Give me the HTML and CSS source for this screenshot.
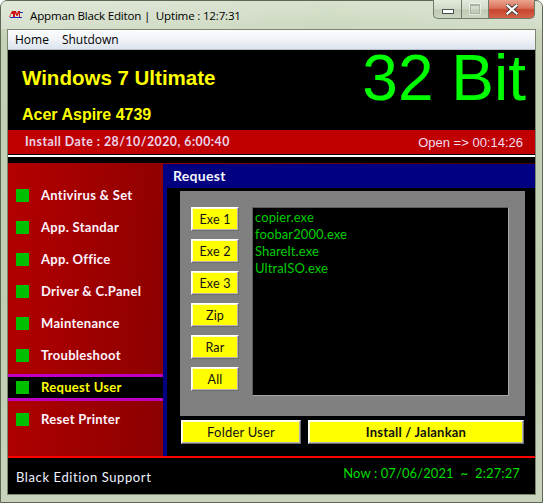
FILE: index.html
```html
<!DOCTYPE html>
<html>
<head>
<meta charset="utf-8">
<title>Appman Black Editon</title>
<link rel="stylesheet" href="styles.css">
</head>
<body>
<div class="window">
  <div class="titlebar">
    <svg class="app-icon" width="14" height="7" viewBox="0 0 14 7">
      <polygon points="0,6 3,0 5,0 5,6 4,6 4,3 2,3 1,6" fill="#d01010"/>
      <polygon points="5,0 7,0 8,3 9,0 11,0 11,6 10,6 10,2 8.5,5 7.5,5 6,2 6,6 5,6" fill="#d01010"/>
      <rect x="1" y="6" width="12" height="1" fill="#2030c0"/>
      <rect x="11" y="1" width="3" height="1" fill="#2030c0"/>
    </svg>
    <span class="title">Appman Black Editon |&nbsp; Uptime : 12:7:31</span>
    <div class="caption-buttons">
      <div class="cbtn cmin"><span class="min-glyph"></span></div>
      <div class="cbtn cmax"><span class="max-glyph"></span></div>
      <div class="cbtn cclose">
        <svg width="12" height="11" viewBox="0 0 12 11">
          <path d="M1.5 1.5 L10.5 9.5 M10.5 1.5 L1.5 9.5" stroke="#3a3a3a" stroke-width="4" stroke-linecap="square"/>
          <path d="M1.5 1.5 L10.5 9.5 M10.5 1.5 L1.5 9.5" stroke="#ffffff" stroke-width="2.2" stroke-linecap="square"/>
        </svg>
      </div>
    </div>
  </div>
  <div class="client">
    <div class="menubar">
      <span class="menu-item">Home</span>
      <span class="menu-item">Shutdown</span>
    </div>
    <div class="header">
      <div class="hleft">
        <div class="os">Windows 7 Ultimate</div>
        <div class="model">Acer Aspire 4739</div>
      </div>
      <div class="bits">32 Bit</div>
    </div>
    <div class="infobar">
      <span class="install">Install Date : 28/10/2020, 6:00:40</span>
      <span class="open">Open =&gt; 00:14:26</span>
    </div>
    <div class="sep"></div>
    <div class="main">
      <nav class="sidebar">
        <div class="nav-item"><span class="sq"></span><span class="lbl">Antivirus &amp; Set</span></div>
        <div class="nav-item"><span class="sq"></span><span class="lbl">App. Standar</span></div>
        <div class="nav-item"><span class="sq"></span><span class="lbl">App. Office</span></div>
        <div class="nav-item"><span class="sq"></span><span class="lbl">Driver &amp; C.Panel</span></div>
        <div class="nav-item"><span class="sq"></span><span class="lbl">Maintenance</span></div>
        <div class="nav-item"><span class="sq"></span><span class="lbl">Troubleshoot</span></div>
        <div class="nav-item active"><span class="sq"></span><span class="lbl">Request User</span></div>
        <div class="nav-item"><span class="sq"></span><span class="lbl">Reset Printer</span></div>
      </nav>
      <section class="panel">
        <div class="panel-head">Request</div>
        <div class="panel-body">
          <div class="box">
            <div class="btncol">
              <div class="ybtn small">Exe 1</div>
              <div class="ybtn small">Exe 2</div>
              <div class="ybtn small">Exe 3</div>
              <div class="ybtn small">Zip</div>
              <div class="ybtn small">Rar</div>
              <div class="ybtn small">All</div>
            </div>
            <div class="list">
              <div class="li">copier.exe</div>
              <div class="li">foobar2000.exe</div>
              <div class="li">ShareIt.exe</div>
              <div class="li">UltraISO.exe</div>
            </div>
          </div>
          <div class="actions">
            <div class="ybtn folder">Folder User</div>
            <div class="ybtn run">Install / Jalankan</div>
          </div>
        </div>
      </section>
    </div>
    <div class="footer">
      <span class="support">Black Edition Support</span>
      <span class="now">Now : 07/06/2021 &nbsp;~&nbsp; 2:27:27</span>
    </div>
  </div>
</div>
</body>
</html>
```

FILE: styles.css
```css
html, body {
  margin: 0;
  padding: 0;
  width: 543px;
  height: 503px;
  overflow: hidden;
  background: #ffffff;
}

.window {
  width: 543px;
  height: 503px;
  box-sizing: border-box;
  border: 1px solid #5d6754;
  border-radius: 7px 7px 0 0;
  background: linear-gradient(180deg, #d6e0cb 0%, #c5d2b7 8%, #bfcdb1 60%, #c8d4bc 100%);
  display: flex;
  flex-direction: column;
  font-family: "Open Sans", "Noto Sans", sans-serif;
}

/* Title bar */
.titlebar {
  height: 28px;
  flex: none;
  display: flex;
  align-items: center;
  padding-left: 8px;
  background: linear-gradient(90deg, rgba(255,255,255,0.25), rgba(255,255,255,0.05) 60%, rgba(255,255,255,0.15));
}

.app-icon {
  flex: none;
  margin-right: 7px;
  margin-top: -1px;
}

.title {
  font-size: 11.6px;
  color: #000;
  white-space: nowrap;
  letter-spacing: -0.2px;
  margin-top: 1px;
}

.caption-buttons {
  margin-left: auto;
  margin-right: 7px;
  align-self: flex-start;
  margin-top: -1px;
  display: flex;
  height: 19px;
}

.cbtn {
  box-sizing: border-box;
  height: 19px;
  border: 1px solid #6f7a68;
  border-top: none;
  display: flex;
  align-items: center;
  justify-content: center;
}

.cmin {
  width: 28px;
  border-radius: 0 0 0 5px;
  border-right: none;
  background: linear-gradient(180deg, #e4eadd 0%, #d1dac8 50%, #bfcab4 55%, #ccd6c2 100%);
}

.cmax {
  width: 27px;
  border-right: none;
  background: linear-gradient(180deg, #e4eadd 0%, #d1dac8 50%, #bfcab4 55%, #ccd6c2 100%);
}

.cclose {
  width: 47px;
  border-radius: 0 0 5px 0;
  background: linear-gradient(180deg, #eba590 0%, #d9705a 45%, #c8442c 55%, #d4634a 100%);
}

.min-glyph {
  width: 10px;
  height: 3px;
  background: #fff;
  border: 1px solid #49524a;
  margin-top: 5px;
}

.max-glyph {
  width: 8px;
  height: 7px;
  border: 1px solid #a9b3a2;
  border-top-width: 2px;
  box-shadow: 0 0 0 1px rgba(255,255,255,0.5);
}

/* Client */
.client {
  flex: none;
  margin: 0 6px;
  height: 466px;
  box-sizing: border-box;
  border: 1px solid #7b866f;
  display: flex;
  flex-direction: column;
  background: #000;
}

.menubar {
  height: 20px;
  box-sizing: border-box;
  flex: none;
  display: flex;
  align-items: center;
  padding-left: 7px;
  background: linear-gradient(180deg, #fdfdfe 0%, #f0f3f8 50%, #dde4ee 100%);
  border-bottom: 1px solid #b9c1cf;
}

.menu-item {
  font-size: 12px;
  color: #000;
  margin-right: 13px;
  line-height: 18px;
}

.header {
  height: 80px;
  flex: none;
  background: #000;
  display: flex;
  justify-content: space-between;
  font-family: "Liberation Sans", Arial, sans-serif;
}

.hleft {
  padding: 16px 0 0 14px;
}

.os {
  font-size: 20.5px;
  font-weight: bold;
  color: #ffff00;
  line-height: 24px;
  white-space: nowrap;
}

.model {
  margin-top: 15px;
  font-size: 16px;
  font-weight: bold;
  color: #ffff00;
  line-height: 20px;
  white-space: nowrap;
}

.bits {
  font-size: 64px;
  line-height: 56px;
  color: #00ff00;
  padding-right: 9px;
  white-space: nowrap;
}

.infobar {
  height: 24px;
  flex: none;
  background: #c00000;
  display: flex;
  justify-content: space-between;
  align-items: center;
  padding: 0 12px 0 17px;
  border-bottom: 1px solid #000;
}

.install {
  font-family: Lato, "Open Sans", sans-serif;
  font-weight: bold;
  font-size: 12.3px;
  color: #ecd4ec;
  letter-spacing: 0.5px;
  margin-top: -2px;
}

.open {
  font-family: "Liberation Sans", Arial, sans-serif;
  font-size: 13px;
  color: #f2dcf2;
  margin-top: 1px;
}

.sep {
  height: 2px;
  flex: none;
  background: #ffffff;
  border-bottom: 6px solid #000;
}

/* Main area */
.main {
  height: 293px;
  flex: none;
  display: flex;
  background: linear-gradient(95deg, #b40000 0%, #8e0000 30%, #5c0000 70%, #3c0000 100%);
}

.sidebar {
  width: 155px;
  flex: none;
  padding-top: 19px;
  display: flex;
  flex-direction: column;
  gap: 5px;
}

.nav-item {
  height: 27px;
  box-sizing: border-box;
  border-top: 3px solid transparent;
  border-bottom: 3px solid transparent;
  display: flex;
  align-items: center;
  padding-left: 8px;
}

.nav-item.active {
  border-color: #c000c0;
  background: #000;
}

.sq {
  width: 13px;
  height: 13px;
  background: #00bf00;
  flex: none;
  margin-right: 12px;
}

.lbl {
  font-family: Lato, "Open Sans", sans-serif;
  font-weight: bold;
  font-size: 13px;
  color: #fff4ff;
  letter-spacing: 0.3px;
  white-space: nowrap;
  margin-top: -2px;
}

.nav-item.active .lbl {
  color: #ffff00;
}

.panel {
  flex: 1;
  margin-top: 1px;
  background: #000080;
  display: flex;
  flex-direction: column;
}

.panel-head {
  height: 24px;
  flex: none;
  line-height: 24px;
  padding-left: 10px;
  font-family: Lato, "Open Sans", sans-serif;
  font-weight: bold;
  font-size: 14px;
  color: #f4f4ff;
  letter-spacing: 0.3px;
}

.panel-body {
  flex: 1;
  margin-left: 4px;
  background: #000;
  padding: 3px 10px 0 13px;
}

.box {
  width: 345px;
  height: 225px;
  box-sizing: border-box;
  background: #808080;
  display: flex;
  padding: 16px 0 0 11px;
  gap: 13px;
}

.btncol {
  display: flex;
  flex-direction: column;
  gap: 8px;
}

.ybtn {
  box-sizing: border-box;
  height: 24px;
  background: #ffff00;
  border-top: 1px solid #ffffff;
  border-left: 1px solid #ffffff;
  border-right: 1px solid #6b6b6b;
  border-bottom: 1px solid #6b6b6b;
  box-shadow: inset -1px -1px 0 #b8b8b8, inset 1px 1px 0 #ffffd8;
  display: flex;
  align-items: center;
  justify-content: center;
  font-family: Lato, "Open Sans", sans-serif;
  font-size: 12.5px;
  color: #111;
  letter-spacing: 0.2px;
  white-space: nowrap;
}

.ybtn.small {
  width: 48px;
}

.list {
  width: 257px;
  height: 189px;
  box-sizing: border-box;
  background: #000;
  border-top: 1px solid #5c5c5c;
  border-left: 1px solid #5c5c5c;
  border-right: 1px solid #a6a6a6;
  border-bottom: 1px solid #a6a6a6;
  padding: 1px 0 0 2px;
}

.li {
  font-family: Lato, "Open Sans", sans-serif;
  font-size: 13px;
  line-height: 17px;
  color: #00cc00;
  letter-spacing: 0.1px;
}

.actions {
  display: flex;
  gap: 7px;
  margin-top: 4px;
  padding-left: 1px;
}

.ybtn.folder {
  width: 120px;
  font-size: 13px;
}

.ybtn.run {
  width: 216px;
  font-weight: bold;
  font-size: 13px;
}

/* Footer */
.footer {
  flex: 1;
  background: #000;
  border-top: 2px solid #ff0000;
  display: flex;
  justify-content: space-between;
  align-items: flex-start;
  padding: 0 15px 0 8px;
}

.support {
  font-family: Lato, "Open Sans", sans-serif;
  font-size: 13px;
  color: #eef2ff;
  letter-spacing: 0.6px;
  margin-top: 11px;
}

.now {
  font-family: Lato, "Open Sans", sans-serif;
  font-size: 13px;
  color: #00dd00;
  letter-spacing: 0.1px;
  margin-top: 7px;
  white-space: nowrap;
}
```
